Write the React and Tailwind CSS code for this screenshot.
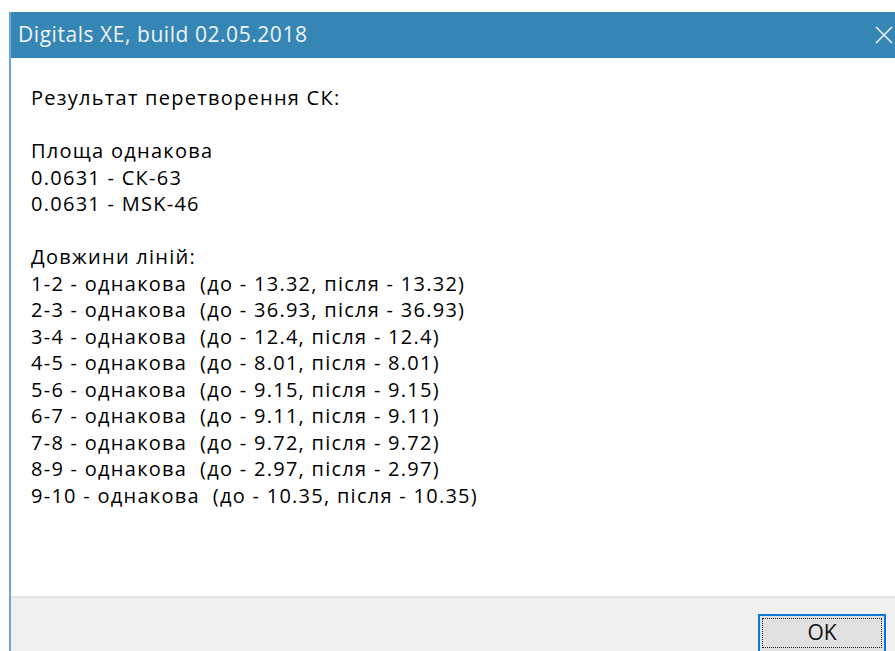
const LINES = [
  'Результат перетворення СК:',
  '',
  'Площа однакова',
  '0.0631 - СК-63',
  '0.0631 - MSK-46',
  '',
  'Довжини ліній:',
  '1-2 - однакова  (до - 13.32, після - 13.32)',
  '2-3 - однакова  (до - 36.93, після - 36.93)',
  '3-4 - однакова  (до - 12.4, після - 12.4)',
  '4-5 - однакова  (до - 8.01, після - 8.01)',
  '5-6 - однакова  (до - 9.15, після - 9.15)',
  '6-7 - однакова  (до - 9.11, після - 9.11)',
  '7-8 - однакова  (до - 9.72, після - 9.72)',
  '8-9 - однакова  (до - 2.97, після - 2.97)',
  '9-10 - однакова  (до - 10.35, після - 10.35)',
]

function CloseIcon() {
  return (
    <svg width="18" height="18" viewBox="0 0 18 18" className="shrink-0">
      <path d="M1 1 L17 17 M17 1 L1 17" stroke="#f2f6fa" strokeWidth="1.5" fill="none" />
    </svg>
  )
}

export default function App() {
  return (
    <div
      className="h-[651px] w-[895px] overflow-hidden bg-white pt-3 pl-[9px]"
      style={{ fontFamily: '"Open Sans", "Noto Sans", sans-serif' }}
    >
      <div className="flex h-full w-[900px] flex-col border-l-2 border-[#6aa6d6]">
        {/* title bar */}
        <div className="flex h-[46px] shrink-0 items-center justify-between bg-[#3586b4] pl-[7px] pr-[16px]">
          <span className="whitespace-pre text-[21px] tracking-[0.55px] text-[#eef4f9]">Digitals XE, build 02.05.2018</span>
          <CloseIcon />
        </div>

        {/* message */}
        <div className="flex-1 bg-white pl-5 pt-[27px]">
          {LINES.map((line, i) => (
            <div key={i} className="h-[26.5px] whitespace-pre text-[20px] leading-[26.5px] tracking-[1.27px] text-black">
              {line}
            </div>
          ))}
        </div>

        {/* buttons */}
        <div className="flex h-[55px] shrink-0 items-start justify-end border-t-2 border-[#e2e2e2] bg-[#f0f0f0] pr-[23px] pt-[16px]">
          <button className="flex h-[40px] w-[128px] items-start justify-center border-2 border-[#0a78d4] bg-[#e1e1e1] p-[2px]">
            <span className="flex h-[30px] w-full items-center justify-center border border-dotted border-[#222] text-[21px] text-[#111]">
              OK
            </span>
          </button>
        </div>
      </div>
    </div>
  )
}
